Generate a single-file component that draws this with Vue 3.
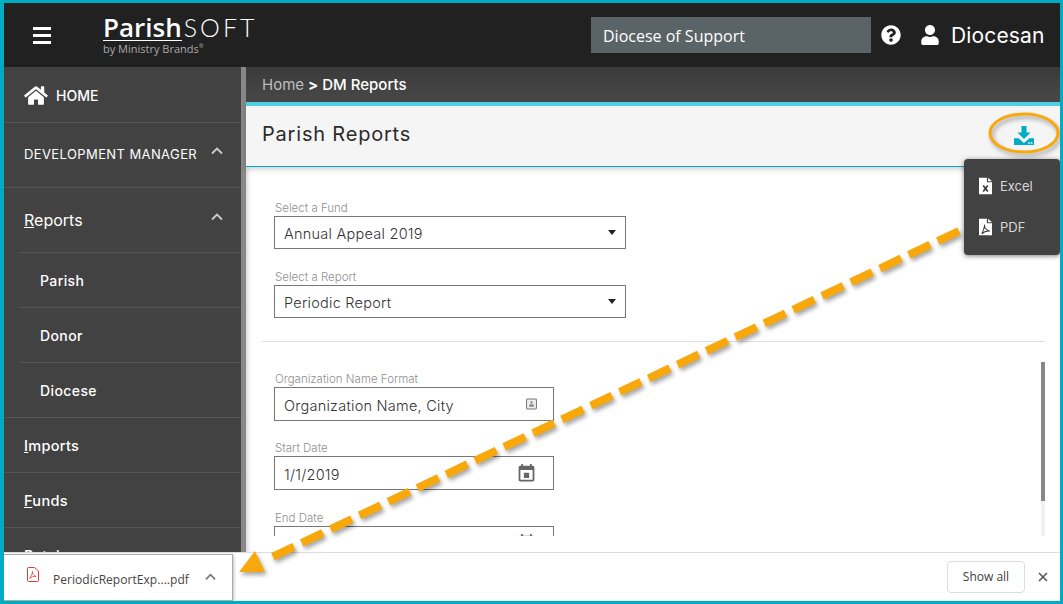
<template>
  <div class="frame">
    <header class="topbar">
      <div class="burger"><span /><span /><span /></div>
      <div class="logo">
        <div class="logo-name"><span class="logo-parish">Parish</span><span class="logo-soft">SOFT</span></div>
        <div class="logo-sub">by Ministry Brands<sup>®</sup></div>
      </div>
      <div class="diocese">Diocese of Support</div>
      <svg class="help" viewBox="0 0 512 512"><path fill="#fff" d="M504 256c0 136.997-111.043 248-248 248S8 392.997 8 256C8 119.083 119.043 8 256 8s248 111.083 248 248zM262.655 90c-54.497 0-89.255 22.957-116.549 63.758-3.536 5.286-2.353 12.415 2.715 16.258l34.699 26.31c5.205 3.947 12.621 3.008 16.665-2.122 17.864-22.658 30.113-35.797 57.303-35.797 20.429 0 45.698 13.148 45.698 32.958 0 14.976-12.363 22.667-32.534 33.976C247.128 238.528 216 254.941 216 296v4c0 6.627 5.373 12 12 12h56c6.627 0 12-5.373 12-12v-1.333c0-28.462 83.186-29.647 83.186-106.667 0-58.002-60.165-102-116.531-102zM256 338c-25.365 0-46 20.635-46 46 0 25.364 20.635 46 46 46s46-20.636 46-46c0-25.365-20.635-46-46-46z" /></svg>
      <svg class="user" viewBox="0 0 448 512"><path fill="#fff" d="M224 256c70.7 0 128-57.3 128-128S294.7 0 224 0 96 57.3 96 128s57.3 128 128 128zm89.6 32h-16.7c-22.2 10.2-46.9 16-72.9 16s-50.6-5.8-72.9-16h-16.7C60.2 288 0 348.2 0 422.4V464c0 26.5 21.5 48 48 48h352c26.5 0 48-21.5 48-48v-41.6c0-74.2-60.2-134.4-134.4-134.4z" /></svg>
      <span class="username">Diocesan</span>
    </header>

    <div class="body">
      <nav class="sidebar">
        <div class="nav-home">
          <svg class="home-icon" viewBox="0 0 576 512"><path fill="#fff" d="M280.37 148.26L96 300.11V464a16 16 0 0 0 16 16l112.06-.29a16 16 0 0 0 15.92-16V368a16 16 0 0 1 16-16h64a16 16 0 0 1 16 16v95.64a16 16 0 0 0 16 16.05L464 480a16 16 0 0 0 16-16V300L295.67 148.26a12.19 12.19 0 0 0-15.3 0zM571.6 251.47L488 182.56V44.05a12 12 0 0 0-12-12h-56a12 12 0 0 0-12 12v72.61L318.47 43a48 48 0 0 0-61 0L4.34 251.47a12 12 0 0 0-1.6 16.9l25.5 31A12 12 0 0 0 45.15 301l235.22-193.74a12.19 12.19 0 0 1 15.3 0L530.9 301a12 12 0 0 0 16.9-1.6l25.5-31a12 12 0 0 0-1.7-16.93z" /></svg>
          <span>HOME</span>
        </div>
        <div class="nav-row nav-section">
          <span class="caps">DEVELOPMENT MANAGER</span>
          <svg class="chev" viewBox="0 0 12 8"><path d="M1 6.5L6 1.5l5 5" /></svg>
        </div>
        <div class="nav-row nav-reports">
          <span><u>R</u>eports</span>
          <svg class="chev" viewBox="0 0 12 8"><path d="M1 6.5L6 1.5l5 5" /></svg>
        </div>
        <div v-for="sub in subItems" :key="sub" class="nav-sub"><span>{{ sub }}</span></div>
        <div v-for="item in mainItems" :key="item.rest" class="nav-row nav-main">
          <span><u>{{ item.key }}</u>{{ item.rest }}</span>
        </div>
      </nav>
      <div class="side-scroll" />

      <main class="main">
        <div class="crumbs"><span class="crumb-home">Home</span><span class="crumb-sep">&gt;</span><span class="crumb-cur">DM Reports</span></div>
        <div class="titlebar">
          <h1>Parish Reports</h1>
          <svg class="dl-icon" viewBox="0 0 20 20">
            <path fill="#00acc1" d="M7.5 0h5v6.5h4L10 13 3.5 6.5h4z" />
            <path fill="#00acc1" d="M0 12.2h4.6L10 17l5.4-4.8H20V19H0z" />
            <rect x="14.2" y="16.2" width="1.6" height="1.6" fill="#f5f5f5" />
            <rect x="16.8" y="16.2" width="1.6" height="1.6" fill="#f5f5f5" />
          </svg>
        </div>

        <div class="menu">
          <div class="menu-row">
            <svg class="file-icon" viewBox="0 0 14 18">
              <path fill="#fff" d="M0 0h8.5v5H14v13H0zM9.8 0L14 3.8H9.8z" />
              <path d="M4.500 8.500l5 6.500M9.500 8.500l-5 6.500" stroke="#333" stroke-width="1.700" fill="none" />
            </svg>
            <span>Excel</span>
          </div>
          <div class="menu-row">
            <svg class="file-icon" viewBox="0 0 14 18">
              <path fill="#fff" d="M0 0h8.5v5H14v13H0zM9.8 0L14 3.8H9.8z" />
              <path d="M6 6.500c-.6 2.500 1.400 5.500 5.500 7-3-.4-6 .4-8.500 3 1-2.500 3-5.500 3-10z" stroke="#333" stroke-width="1.100" fill="none" />
            </svg>
            <span>PDF</span>
          </div>
        </div>

        <div class="content">
          <div class="top-fields">
            <div class="field wide">
              <label>Select a Fund</label>
              <div class="box select"><span>Annual Appeal 2019</span><i class="caret" /></div>
            </div>
            <div class="field wide">
              <label>Select a Report</label>
              <div class="box select"><span>Periodic Report</span><i class="caret" /></div>
            </div>
          </div>
          <hr />
          <div class="lower">
            <div class="lower-fields">
              <div class="field">
                <label>Organization Name Format</label>
                <div class="box">
                  <span>Organization Name, City</span>
                  <svg class="contact-icon" viewBox="0 0 12 12">
                    <rect x=".6" y=".6" width="10.800" height="10.800" rx="1" fill="#eee" stroke="#777" stroke-width="1.100" />
                    <circle cx="6" cy="4.200" r="1.300" fill="#888" />
                    <path d="M3.500 9V7.600c0-.7.6-1.200 1.200-1.200h2.600c.6 0 1.200.5 1.200 1.200V9z" fill="#888" />
                  </svg>
                </div>
              </div>
              <div class="field">
                <label>Start Date</label>
                <div class="box">
                  <span>1/1/2019</span>
                  <svg class="cal-icon" viewBox="0 0 24 24"><path fill="#666" d="M15 11H9v6h6zM16 1v2H8V1H6v2H5c-1.110 0-1.990.9-1.990 2L3 19c0 1.100.89 2 2 2h14c1.100 0 2-.9 2-2V5c0-1.100-.9-2-2-2h-1V1zm3 18H5V8h14z" /></svg>
                </div>
              </div>
              <div class="field end-date">
                <label>End Date</label>
                <div class="box">
                  <span></span>
                  <svg class="cal-icon" viewBox="0 0 24 24"><path fill="#666" d="M15 11H9v6h6zM16 1v2H8V1H6v2H5c-1.110 0-1.990.9-1.990 2L3 19c0 1.100.89 2 2 2h14c1.100 0 2-.9 2-2V5c0-1.100-.9-2-2-2h-1V1zm3 18H5V8h14z" /></svg>
                </div>
              </div>
            </div>
            <div class="form-scroll"><div class="form-thumb" /></div>
          </div>
        </div>
      </main>
    </div>

    <footer class="downloads">
      <div class="chip">
        <svg class="pdf-icon" viewBox="0 0 12 15">
          <path d="M1.500.5h6L11.500 4v9.500a1 1 0 0 1-1 1h-9a1 1 0 0 1-1-1v-12a1 1 0 0 1 1-1z" fill="#fff" stroke="#e53935" />
          <path d="M5.500 4.500c-.3 2 .8 4 3.500 5-2-.3-4.500.2-6.300 2 .9-1.800 2.500-4 2.800-7z" fill="none" stroke="#e53935" stroke-width=".8" />
        </svg>
        <span class="chip-name">PeriodicReportExp....pdf</span>
        <svg class="chip-chev" viewBox="0 0 12 8"><path d="M1 6.500L6 1.500l5 5" /></svg>
      </div>
      <div class="show-all">Show all</div>
      <svg class="close" viewBox="0 0 10 10"><path d="M1 1l8 8M9 1l-8 8" /></svg>
    </footer>

    <svg class="callout" viewBox="0 0 1063 604">
      <ellipse cx="1024" cy="133" rx="34" ry="19" fill="none" stroke="#f9a80c" stroke-width="3" />
      <line x1="959" y1="231" x2="272" y2="557" stroke="#f9a80c" stroke-width="8" stroke-dasharray="23.500 8.500" />
      <polygon points="239,572 255,551 265,572" fill="#f9a80c" />
    </svg>
  </div>
</template>

<script setup>
const subItems = ['Parish', 'Donor', 'Diocese']

const mainItems = [
  { key: 'I', rest: 'mports' },
  { key: 'F', rest: 'unds' },
  { key: 'B', rest: 'atches' },
]
</script>

<style>
body {
  margin: 0;
  background: #fff;
}
</style>

<style scoped>
.frame {
  position: relative;
  box-sizing: border-box;
  width: 1063px;
  height: 604px;
  display: flex;
  flex-direction: column;
  overflow: hidden;
  border: solid #00acc1;
  border-width: 3px 3px 3px 4px;
  background: #fff;
  font-family: Inter, "Open Sans", sans-serif;
  color: #333;
}

/* top bar */
.topbar {
  flex: 0 0 64px;
  display: flex;
  align-items: center;
  background: #212121;
  color: #fff;
}
.burger {
  display: flex;
  flex-direction: column;
  gap: 4px;
  margin-left: 29px;
  width: 18px;
}
.burger span {
  height: 3px;
  background: #fff;
}
.logo {
  margin-left: 52px;
  width: 160px;
}
.logo-name {
  display: flex;
  align-items: flex-start;
  height: 27px;
}
.logo-parish {
  font-family: "Open Sans", sans-serif;
  font-size: 26px;
  font-weight: 600;
  border-bottom: 1px solid #fff;
  height: 25px;
  line-height: 25px;
}
.logo-soft {
  font-family: Lato, sans-serif;
  font-size: 25px;
  line-height: 25px;
  font-weight: 300;
  letter-spacing: 3px;
  margin-left: 2px;
}
.logo-sub {
  font-family: "Open Sans", sans-serif;
  font-size: 11px;
  line-height: 14px;
  color: #aaa;
}
.logo-sub sup {
  font-size: 6px;
  line-height: 0;
}
.diocese {
  box-sizing: border-box;
  width: 280px;
  height: 36px;
  margin-left: 328px;
  padding: 1px 0 0 12px;
  line-height: 36px;
  background: #5a6466;
  font-family: "Open Sans", sans-serif;
  font-size: 16px;
}
.help {
  width: 20px;
  height: 20px;
  margin-left: 10px;
}
.user {
  width: 18px;
  height: 20px;
  margin-left: 20px;
}
.username {
  margin-left: 12px;
  font-size: 21px;
  letter-spacing: 0.15px;
}

/* sidebar */
.body {
  flex: 1;
  min-height: 0;
  display: flex;
}
.sidebar {
  flex: 0 0 237px;
  overflow: hidden;
  background: #424242;
  color: #fff;
}
.side-scroll {
  flex: 0 0 5px;
  background: #888;
}
.nav-home {
  display: flex;
  align-items: center;
  height: 56px;
  box-sizing: border-box;
  padding: 2px 0 0 20px;
  border-bottom: 1px solid #555;
  font-size: 14px;
  font-weight: 500;
}
.home-icon {
  width: 24px;
  height: 21px;
  margin-right: 8px;
}
.nav-row {
  display: flex;
  align-items: center;
  justify-content: space-between;
  box-sizing: border-box;
  padding: 0 18px 0 20px;
  height: 55px;
  border-bottom: 1px solid #555;
}
.nav-section {
  height: 65px;
  padding-bottom: 2px;
}
.nav-reports {
  height: 64px;
  border-bottom: none;
  font-size: 16px;
}
.caps {
  font-size: 13px;
  letter-spacing: 0.4px;
}
.chev {
  width: 12px;
  height: 8px;
  margin-bottom: 6px;
  fill: none;
  stroke: #ccc;
  stroke-width: 1.800;
}
.nav-sub {
  box-sizing: border-box;
  height: 55px;
  padding-left: 16px;
  font-size: 14px;
  font-weight: 500;
  letter-spacing: 0.4px;
}
.nav-sub span {
  display: block;
  height: 55px;
  line-height: 55px;
  padding-left: 20px;
  border-top: 1px solid #555;
}
.nav-main {
  font-weight: 500;
  font-size: 14.500px;
  letter-spacing: 0.3px;
}
.nav-sub + .nav-main {
  height: 56px;
  border-top: 1px solid #555;
}

/* main column */
.main {
  position: relative;
  flex: 1;
  min-width: 0;
  display: flex;
  flex-direction: column;
  box-shadow: inset 6px 0 6px -6px rgba(0, 0, 0, 0.3);
}
.crumbs {
  flex: 0 0 35px;
  display: flex;
  align-items: center;
  gap: 4px;
  box-sizing: border-box;
  padding-left: 16px;
  background: linear-gradient(#3b3b3b, #484848);
  font-size: 15px;
}
.crumb-home {
  color: #bdbdbd;
}
.crumb-sep {
  color: #fff;
  font-weight: 700;
}
.crumb-cur {
  color: #fff;
  font-weight: 500;
}
.titlebar {
  flex: 0 0 65px;
  box-sizing: border-box;
  display: flex;
  align-items: center;
  justify-content: space-between;
  padding: 0 26px 4px 16px;
  border-top: 4px solid #4dd0e1;
  border-bottom: 1px solid #00acc1;
  background: #f5f5f5;
  box-shadow: 0 2px 6px rgba(0, 0, 0, 0.2);
}
.titlebar h1 {
  margin: 0;
  font-size: 20px;
  font-weight: 400;
  color: #2b2b2b;
  letter-spacing: 0.8px;
}
.dl-icon {
  width: 20px;
  height: 20px;
  margin-top: 4px;
}

/* export menu */
.menu {
  position: absolute;
  z-index: 2;
  top: 92px;
  right: 0;
  box-sizing: border-box;
  width: 96px;
  height: 96px;
  padding-top: 6px;
  border-radius: 4px;
  background: #424242;
  box-shadow: 0 1px 5px rgba(0, 0, 0, 0.5);
  color: #d8d8d8;
  font-size: 13px;
}
.menu-row {
  display: flex;
  align-items: center;
  height: 41px;
  padding-left: 15px;
  gap: 8px;
}
.file-icon {
  width: 13px;
  height: 18px;
}

/* form */
.content {
  box-sizing: border-box;
  height: 369px;
  padding: 35px 15px 0 16px;
}
.top-fields {
  display: flex;
  flex-direction: column;
  gap: 22px;
  padding-left: 12px;
}
.field label {
  display: block;
  height: 14px;
  line-height: 13px;
  font-size: 11.500px;
  font-weight: 300;
  color: #8f8f8f;
  margin-left: 1px;
}
.box {
  box-sizing: border-box;
  display: flex;
  align-items: center;
  justify-content: space-between;
  width: 280px;
  height: 34px;
  padding: 2px 18px 0 9px;
  border: 1px solid #777;
  font-size: 14.500px;
  font-weight: 300;
  letter-spacing: 0.25px;
  color: #333;
}
.wide .box {
  width: 352px;
  height: 33px;
  padding-right: 9px;
}
.caret {
  width: 0;
  height: 0;
  margin-bottom: 2px;
  border-style: solid;
  border-width: 5px 4.500px 0;
  border-color: #222 transparent transparent;
}
hr {
  height: 1px;
  margin: 23px 0 0;
  border: none;
  background: #e0e0e0;
}
.lower {
  display: flex;
  justify-content: space-between;
  height: 194px;
  overflow: hidden;
}
.lower-fields {
  display: flex;
  flex-direction: column;
  gap: 21px;
  padding: 31px 0 0 12px;
}
.end-date {
  margin-top: 1px;
}
.contact-icon {
  width: 11px;
  height: 12px;
  margin: -2px -2px 0 0;
}
.cal-icon {
  width: 21px;
  height: 21px;
  margin: -2px -2px 0 auto;
}
.form-scroll {
  width: 4px;
  margin-top: 20px;
  background: #f1f1f1;
}
.form-thumb {
  height: 139px;
  background: #888;
}

/* download shelf */
.downloads {
  flex: 0 0 49px;
  box-sizing: border-box;
  display: flex;
  align-items: center;
  border-top: 1px solid #ddd;
  background: #fff;
  font-family: "Open Sans", sans-serif;
}
.chip {
  position: relative;
  z-index: 1;
  box-sizing: border-box;
  display: flex;
  align-items: center;
  width: 230px;
  height: 47px;
  margin-left: -1px;
  padding-left: 23px;
  border: 1px solid #aaa;
  box-shadow: 1px 1px 3px rgba(0, 0, 0, 0.25);
  background: #fff;
}
.pdf-icon {
  width: 12px;
  height: 15px;
  margin-bottom: 6px;
}
.chip-name {
  margin: 4px 0 0 14px;
  font-size: 12px;
  letter-spacing: 0.05px;
  color: #444;
}
.chip-chev {
  width: 11px;
  height: 8px;
  margin-left: auto;
  margin-right: 16px;
  fill: none;
  stroke: #777;
  stroke-width: 1.800;
}
.show-all {
  box-sizing: border-box;
  width: 78px;
  height: 32px;
  margin-left: auto;
  line-height: 30px;
  text-align: center;
  border: 1px solid #dadce0;
  border-radius: 4px;
  font-size: 12px;
  font-weight: 500;
  color: #3c4043;
}
.close {
  width: 10px;
  height: 10px;
  margin: 0 12px 0 13px;
  fill: none;
  stroke: #555;
  stroke-width: 1.600;
}

/* annotation drawn over the screenshot */
.callout {
  position: absolute;
  z-index: 3;
  top: -3px;
  left: -4px;
  width: 1063px;
  height: 604px;
  pointer-events: none;
  filter: drop-shadow(2px 3px 2px rgba(0, 0, 0, 0.35));
}
</style>
